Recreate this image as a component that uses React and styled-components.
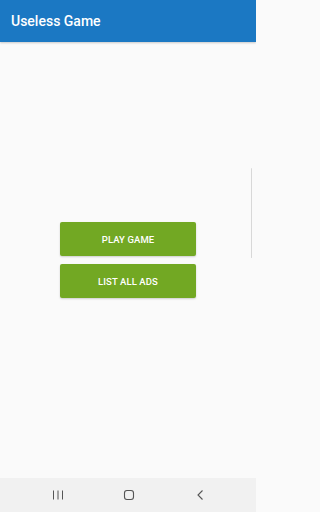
import React from 'react';
import styled, { createGlobalStyle } from 'styled-components';

const GlobalStyle = createGlobalStyle`
  html, body {
    margin: 0;
    padding: 0;
    background: #fafafa;
  }
  #root {
    font-family: Roboto, 'Liberation Sans', sans-serif;
  }
`;

const Screen = styled.div`
  position: relative;
  width: 256px;
  height: 512px;
  display: flex;
  flex-direction: column;
  background: #fafafa;
  overflow: hidden;
`;

const AppBar = styled.header`
  height: 42px;
  flex-shrink: 0;
  display: flex;
  align-items: center;
  padding: 0 11px;
  background: #1b78c3;
  box-shadow: 0 1px 2px rgba(0, 0, 0, 0.2);
  color: #ffffff;
  font-size: 14px;
  font-weight: 500;
`;

const Content = styled.main`
  flex: 1;
  display: flex;
  flex-direction: column;
  align-items: center;
  padding-top: 180px;
  gap: 8px;
`;

const ActionButton = styled.button`
  width: 136px;
  height: 34px;
  border: none;
  border-radius: 2px;
  background: #72a823;
  color: #ffffff;
  font-family: inherit;
  font-size: 9.5px;
  font-weight: 500;
  letter-spacing: 0.1px;
  box-shadow: 0 1px 2px rgba(0, 0, 0, 0.18);
`;

const EdgeHandle = styled.div`
  position: absolute;
  right: 4px;
  top: 168px;
  width: 1px;
  height: 90px;
  background: #d8d8d8;
  border-radius: 1px;
`;

const NavBar = styled.nav`
  height: 34px;
  flex-shrink: 0;
  display: flex;
  align-items: center;
  justify-content: center;
  gap: 59px;
  padding-left: 1px;
  background: #f1f1f1;
  color: #555555;
`;

const NavIcon = styled.svg`
  width: 12px;
  height: 12px;
`;

export default function App() {
  return (
    <>
      <GlobalStyle />
      <Screen>
        <AppBar>Useless Game</AppBar>
        <Content>
          <ActionButton>PLAY GAME</ActionButton>
          <ActionButton>LIST ALL ADS</ActionButton>
        </Content>
        <EdgeHandle />
        <NavBar>
          <NavIcon viewBox="0 0 12 12">
            <path d="M1.5 1.5v9M6 1.5v9M10.5 1.5v9" stroke="currentColor" strokeWidth="1" fill="none" />
          </NavIcon>
          <NavIcon viewBox="0 0 12 12">
            <rect x="1.5" y="1.5" width="9" height="9" rx="2.5" stroke="currentColor" strokeWidth="1.1" fill="none" />
          </NavIcon>
          <NavIcon viewBox="0 0 12 12">
            <path d="M8.5 1.5L4 6L8.5 10.5" stroke="currentColor" strokeWidth="1.1" fill="none" />
          </NavIcon>
        </NavBar>
      </Screen>
    </>
  );
}
